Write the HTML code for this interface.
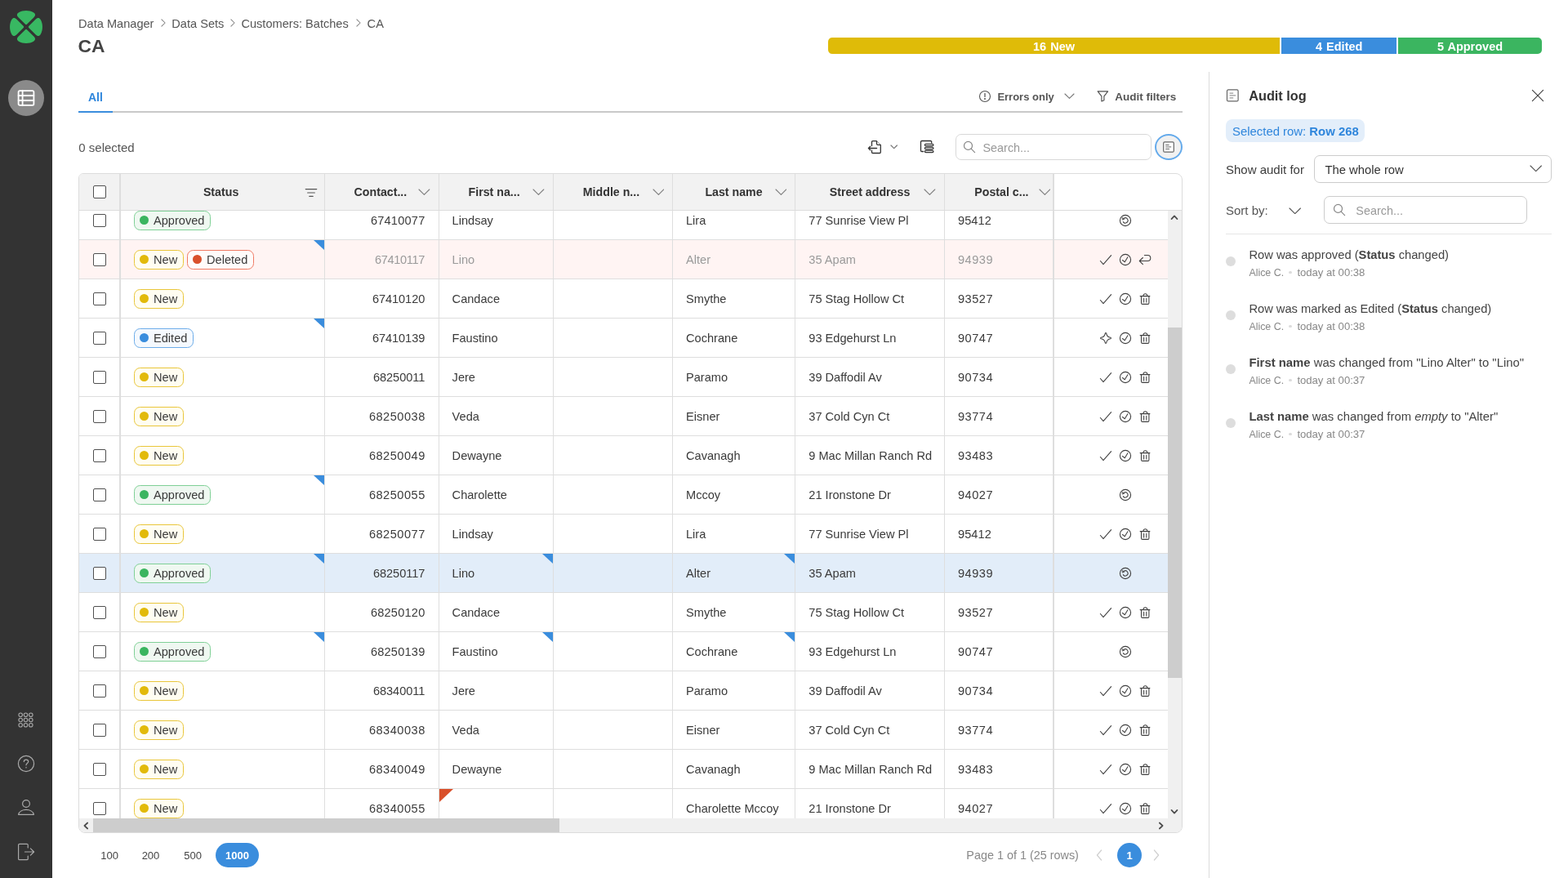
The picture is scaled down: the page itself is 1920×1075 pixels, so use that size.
<!DOCTYPE html>
<html lang="en"><head><meta charset="utf-8"><title>CA - Data Manager</title>
<style>
html,body{margin:0;padding:0}
html{width:1920px;height:1075px;overflow:hidden}
body{width:1920px;height:1075px;position:relative;overflow:hidden;background:#fff;font-family:"Liberation Sans",sans-serif;color:#444}
div,svg{position:absolute;box-sizing:border-box}
.t{white-space:nowrap}
b{font-weight:700}
.cb{width:16px;height:16px;border:1px solid #505050;border-radius:2px;background:#fff}
.badge{height:24px;border:1px solid;border-radius:7.5px}
.dot{width:11px;height:11px;border-radius:50%;left:5.5px;top:4.6px}
.row{left:0;width:1333px;height:48px;border-bottom:1px solid #dedede}
.vl{top:0;width:1px;background:#dedede}
.tri{width:0;height:0;border-style:solid}
</style></head><body>
<div id="app" style="left:0;top:0;width:1920px;height:1075px;overflow:hidden;will-change:transform">

<div style="left:0px;top:0px;width:64px;height:1075px;background:#333"></div>
<svg width="44" height="44" viewBox="-22 -22 44 44" style="position:absolute;left:10px;top:10.8px"><g fill="#38b862"><path transform="rotate(0)" d="M-0.9 -3.2 Q0 -2.3 0.9 -3.2 L9.3 -11.5 C11.6 -13.8 11.8 -16 9 -17.7 C4 -20.7 -4 -20.7 -9 -17.7 C-11.8 -16 -11.6 -13.8 -9.3 -11.5 Z"/><path transform="rotate(90)" d="M-0.9 -3.2 Q0 -2.3 0.9 -3.2 L9.3 -11.5 C11.6 -13.8 11.8 -16 9 -17.7 C4 -20.7 -4 -20.7 -9 -17.7 C-11.8 -16 -11.6 -13.8 -9.3 -11.5 Z"/><path transform="rotate(180)" d="M-0.9 -3.2 Q0 -2.3 0.9 -3.2 L9.3 -11.5 C11.6 -13.8 11.8 -16 9 -17.7 C4 -20.7 -4 -20.7 -9 -17.7 C-11.8 -16 -11.6 -13.8 -9.3 -11.5 Z"/><path transform="rotate(270)" d="M-0.9 -3.2 Q0 -2.3 0.9 -3.2 L9.3 -11.5 C11.6 -13.8 11.8 -16 9 -17.7 C4 -20.7 -4 -20.7 -9 -17.7 C-11.8 -16 -11.6 -13.8 -9.3 -11.5 Z"/></g></svg>
<div style="left:10px;top:98px;width:44px;height:44px;border-radius:50%;background:#8a8a8a"></div>
<svg width="22" height="22" viewBox="0 0 22 22" fill="none" stroke="#fff" stroke-width="1.8" stroke-linecap="round" stroke-linejoin="round" style="position:absolute;left:21px;top:109px"><rect x="1.6" y="2.1" width="18.8" height="17.8" rx="1.6"/><path d="M1.6 8 H20.4 M1.6 14 H20.4 M6.6 2.1 V19.9"/></svg>
<svg width="21" height="21" viewBox="0 0 21 21" fill="none" stroke="#a9a9a9" stroke-width="1.1" stroke-linecap="round" stroke-linejoin="round" style="position:absolute;left:21.2px;top:870.6px"><circle cx="4.2" cy="4.2" r="2.25"/><circle cx="4.2" cy="10.5" r="2.25"/><circle cx="4.2" cy="16.8" r="2.25"/><circle cx="10.5" cy="4.2" r="2.25"/><circle cx="10.5" cy="10.5" r="2.25"/><circle cx="10.5" cy="16.8" r="2.25"/><circle cx="16.8" cy="4.2" r="2.25"/><circle cx="16.8" cy="10.5" r="2.25"/><circle cx="16.8" cy="16.8" r="2.25"/></svg>
<svg width="22" height="22" viewBox="0 0 22 22" fill="none" stroke="#a9a9a9" stroke-width="1.2" stroke-linecap="round" stroke-linejoin="round" style="position:absolute;left:21px;top:924px"><circle cx="11" cy="11" r="9.6"/><path d="M8.3 8.6 C8.3 5.4 13.7 5.4 13.7 8.6 C13.7 10.6 11 10.6 11 12.8"/><path d="M11 15.4 V15.9"/></svg>
<svg width="22" height="22" viewBox="0 0 22 22" fill="none" stroke="#a9a9a9" stroke-width="1.2" stroke-linecap="round" stroke-linejoin="round" style="position:absolute;left:21px;top:978px"><circle cx="11" cy="6" r="4.4"/><path d="M1.6 19.4 C3 11.4 19 11.4 20.4 19.4 Z"/></svg>
<svg width="22" height="22" viewBox="0 0 22 22" fill="none" stroke="#a9a9a9" stroke-width="1.2" stroke-linecap="round" stroke-linejoin="round" style="position:absolute;left:21px;top:1032px"><path d="M13.2 6 V2.6 C13.2 1.8 12.7 1.3 11.9 1.3 H2.9 C2.1 1.3 1.6 1.8 1.6 2.6 V19.4 C1.6 20.2 2.1 20.7 2.9 20.7 H11.9 C12.7 20.7 13.2 20.2 13.2 19.4 V16"/><path d="M9.4 11 H20.4 M16.4 6.8 L20.6 11 L16.4 15.2"/></svg>
<div class="t" style="top:19.00px;height:20px;line-height:20px;font-size:14.6px;color:#555;left:96px;">Data Manager</div>
<div class="t" style="top:19.00px;height:20px;line-height:20px;font-size:14.6px;color:#555;left:210.3px;">Data Sets</div>
<div class="t" style="top:19.00px;height:20px;line-height:20px;font-size:14.6px;color:#555;left:295.4px;">Customers: Batches</div>
<div class="t" style="top:19.00px;height:20px;line-height:20px;font-size:14.6px;color:#555;left:449.6px;">CA</div>
<svg width="8" height="12" viewBox="0 0 8 12" fill="none" stroke="#858585" stroke-width="1.05" stroke-linecap="round" stroke-linejoin="round" style="position:absolute;left:195.9px;top:22.4px"><path d="M1.9 1.8 L6.1 6 L1.9 10.2"/></svg>
<svg width="8" height="12" viewBox="0 0 8 12" fill="none" stroke="#858585" stroke-width="1.05" stroke-linecap="round" stroke-linejoin="round" style="position:absolute;left:281.1px;top:22.4px"><path d="M1.9 1.8 L6.1 6 L1.9 10.2"/></svg>
<svg width="8" height="12" viewBox="0 0 8 12" fill="none" stroke="#858585" stroke-width="1.05" stroke-linecap="round" stroke-linejoin="round" style="position:absolute;left:435.1px;top:22.4px"><path d="M1.9 1.8 L6.1 6 L1.9 10.2"/></svg>
<div class="t" style="top:42.30px;height:28px;line-height:28px;font-size:22.8px;color:#444;font-weight:700;left:95.6px;">CA</div>
<div style="left:1014px;top:46px;width:553px;height:20px;background:#dfbb08;border-radius:5px 0 0 5px"></div>
<div style="left:1569px;top:46px;width:141px;height:20px;background:#3a8ddd"></div>
<div style="left:1712px;top:46px;width:176px;height:20px;background:#3bb560;border-radius:0 5px 5px 0"></div>
<div class="t" style="top:46.50px;height:20px;line-height:20px;font-size:14.5px;color:#fff;font-weight:700;left:1210.5px;width:160px;text-align:center;word-spacing:1px;">16 New</div>
<div class="t" style="top:46.50px;height:20px;line-height:20px;font-size:14.5px;color:#fff;font-weight:700;left:1559.7px;width:160px;text-align:center;word-spacing:1px;">4 Edited</div>
<div class="t" style="top:46.50px;height:20px;line-height:20px;font-size:14.5px;color:#fff;font-weight:700;left:1720px;width:160px;text-align:center;word-spacing:1px;">5 Approved</div>
<div style="left:96px;top:136px;width:1352px;height:2px;background:#c9c9c9"></div>
<div style="left:96px;top:136px;width:42px;height:2px;background:#3a8ddd"></div>
<div class="t" style="top:108.50px;height:20px;line-height:20px;font-size:14px;color:#2f86dc;font-weight:700;left:108px;">All</div>
<svg width="16" height="16" viewBox="0 0 16 16" fill="none" stroke="#555" stroke-width="1.1" stroke-linecap="round" stroke-linejoin="round" style="position:absolute;left:1198.2px;top:110px"><circle cx="8" cy="8" r="6.5"/><path d="M8 4.6 V8.4" stroke-width="1.3"/><circle cx="8" cy="10.9" r="0.45" fill="#555"/></svg>
<div class="t" style="top:108.50px;height:20px;line-height:20px;font-size:13px;color:#555;font-weight:700;left:1221.4px;">Errors only</div>
<svg width="13" height="7.4" viewBox="0 0 13 7.4" fill="none" stroke="#777" stroke-width="1.1" stroke-linecap="round" stroke-linejoin="round" style="position:absolute;left:1302.60px;top:114.40px"><path d="M1 1 L6.5 6.4 L12 1"/></svg>
<svg width="18" height="18" viewBox="0 0 18 18" fill="none" stroke="#505050" stroke-width="1.15" stroke-linecap="round" stroke-linejoin="round" style="position:absolute;left:1340.5px;top:109px"><path d="M3.2 2.8 H15.6 L10.9 8.8 V13.7 L7.9 15 V8.8 Z"/></svg>
<div class="t" style="top:108.50px;height:20px;line-height:20px;font-size:13.5px;color:#555;font-weight:700;left:1365.2px;">Audit filters</div>
<div class="t" style="top:171.00px;height:20px;line-height:20px;font-size:15px;color:#555;left:96.3px;">0 selected</div>
<svg width="20" height="20" viewBox="0 0 20 20" fill="none" stroke="#333" stroke-width="1.3" stroke-linecap="round" stroke-linejoin="round" style="position:absolute;left:1062px;top:170px"><path d="M5.5 8.6 V3.9 C5.5 3.1 6 2.6 6.8 2.6 H11.5 V6 C11.5 6.8 12 7.3 12.8 7.3 H16.3 V16.2 C16.3 17 15.8 17.5 15 17.5 H6.8 C6 17.5 5.5 17 5.5 16.2 V14.2"/><path d="M11.7 2.8 L16.1 7.1" stroke-width="0.8" stroke="#777"/><path d="M1.4 11.5 H11.6 M3.7 9.3 L1.4 11.5 L3.7 13.7"/></svg>
<svg width="9.4" height="5.7" viewBox="0 0 9.4 5.7" fill="none" stroke="#777" stroke-width="1.2" stroke-linecap="round" stroke-linejoin="round" style="position:absolute;left:1090.20px;top:177.45px"><path d="M1 1 L4.7 4.7 L8.4 1"/></svg>
<svg width="20" height="20" viewBox="0 0 20 20" fill="none" stroke="#333" stroke-width="1.3" stroke-linecap="round" stroke-linejoin="round" style="position:absolute;left:1125px;top:170px"><path d="M15.7 4.9 V3.8 C15.7 3 15.2 2.5 14.4 2.5 H3.8 C3 2.5 2.5 3 2.5 3.8 V14.2 C2.5 15 3 15.5 3.8 15.5 H5.6"/><rect x="7.4" y="6.4" width="10.5" height="2.3" rx="1.15"/><rect x="7.4" y="10.4" width="10.5" height="2.3" rx="1.15"/><rect x="7.4" y="14.4" width="10.5" height="2.3" rx="1.15"/></svg>
<div style="left:1170px;top:164px;width:240px;height:32px;border:1px solid #d8d8d8;border-radius:7px;background:#fff"></div>
<svg width="18" height="18" viewBox="0 0 18 18" fill="none" stroke="#888" stroke-width="1.2" stroke-linecap="round" stroke-linejoin="round" style="position:absolute;left:1178px;top:171px"><circle cx="7.5" cy="7.4" r="5"/><path d="M11.2 11.2 L15.6 15.6"/></svg>
<div class="t" style="top:171.00px;height:20px;line-height:20px;font-size:14.4px;color:#999;left:1203.5px;">Search...</div>
<div style="left:1414px;top:164px;width:34px;height:32px;border:2px solid #64aaeb;border-radius:50%;background:#f1f1f1"></div>
<svg width="16" height="16" viewBox="0 0 16 16" fill="none" stroke="#666" stroke-width="1.2" stroke-linecap="round" stroke-linejoin="round" style="position:absolute;left:1423px;top:171.9px"><rect x="1.7" y="1.8" width="12.6" height="12.4" rx="1.5" fill="#fff"/><path d="M4.6 5.5 H8.2 M4.6 7.9 H10.8 M4.6 10.4 H8.6" stroke-width="1"/></svg>
<div style="left:96px;top:212px;width:1352px;height:808px;border:1px solid #dcdcdc;border-radius:6px 8px 8px 8px;overflow:hidden;background:#fff">
<div style="left:0px;top:0px;width:1193px;height:44px;background:#f2f2f2"></div>
<div style="left:0px;top:44px;width:1350px;height:1px;background:#dcdcdc"></div>
<div style="left:0;top:45px;width:1333px;height:744px;overflow:hidden">
<div class="row" style="top:-12px;background:#fff">
<div class="cb" style="left:17px;top:16.0px"></div>
<div class="badge" style="left:67px;top:12.0px;width:94px;border-color:#7fd096;background:#eff8f1"><div class="dot" style="background:#3bb560"></div><div class="t" style="left:23px;top:0;height:22px;line-height:22px;font-size:14.6px;color:#3a3a3a">Approved</div></div>
<div class="t" style="top:14.0px;height:20px;line-height:20px;font-size:14.6px;color:#3a3a3a;right:909.49px;"><span style="letter-spacing:0.21px">67410077</span></div>
<div class="t" style="top:14.0px;height:20px;line-height:20px;font-size:14.6px;color:#3a3a3a;left:456.6px;">Lindsay</div>
<div class="t" style="top:14.0px;height:20px;line-height:20px;font-size:14.6px;color:#3a3a3a;left:743px;">Lira</div>
<div class="t" style="top:14.0px;height:20px;line-height:20px;font-size:14.6px;color:#3a3a3a;left:893.3px;">77 Sunrise View Pl</div>
<div class="t" style="top:14.0px;height:20px;line-height:20px;font-size:14.6px;color:#3a3a3a;left:1076px;"><span style="letter-spacing:0.04px">95412</span></div>
<svg width="16" height="16" viewBox="0 0 16 16" fill="none" stroke="#404040" stroke-width="1.08" stroke-linecap="round" stroke-linejoin="round" style="position:absolute;left:1272.90px;top:15.90px"><circle cx="8" cy="8" r="6.6"/><path d="M5.3 9.6 A3.1 3.1 0 1 0 6.3 5.3"/><path d="M4.5 4.5 L6.9 6.3 L4.6 7.1 Z" fill="#444" stroke-width="0.6"/></svg>
</div>
<div class="row" style="top:36px;background:#fff4f3">
<div class="cb" style="left:17px;top:16.0px"></div>
<div class="badge" style="left:67px;top:12.0px;width:61px;border-color:#e9c63a;background:#fffdf1"><div class="dot" style="background:#e2ba0a"></div><div class="t" style="left:23px;top:0;height:22px;line-height:22px;font-size:14.6px;color:#3a3a3a">New</div></div>
<div class="badge" style="left:132px;top:12.0px;width:82px;border-color:#f07a63;background:#fffbfa"><div class="dot" style="background:#d9502b"></div><div class="t" style="left:23px;top:0;height:22px;line-height:22px;font-size:14.6px;color:#3a3a3a">Deleted</div></div>
<div class="t" style="top:14.0px;height:20px;line-height:20px;font-size:14.6px;color:#9a9a9a;right:910.07px;"><span style="letter-spacing:-0.37px">67410117</span></div>
<div class="t" style="top:14.0px;height:20px;line-height:20px;font-size:14.6px;color:#9a9a9a;left:456.6px;">Lino</div>
<div class="t" style="top:14.0px;height:20px;line-height:20px;font-size:14.6px;color:#9a9a9a;left:743px;">Alter</div>
<div class="t" style="top:14.0px;height:20px;line-height:20px;font-size:14.6px;color:#9a9a9a;left:893.3px;">35 Apam</div>
<div class="t" style="top:14.0px;height:20px;line-height:20px;font-size:14.6px;color:#9a9a9a;left:1076px;"><span style="letter-spacing:0.5px">94939</span></div>
<div class="tri" style="left:287px;top:0;border-width:0 13px 12px 0;border-color:transparent #3a8ddd transparent transparent"></div>
<svg width="16" height="16" viewBox="0 0 16 16" fill="none" stroke="#404040" stroke-width="1.08" stroke-linecap="round" stroke-linejoin="round" style="position:absolute;left:1248.90px;top:15.90px"><path d="M1.4 9.5 L5 13.6 L14.6 2.6"/></svg>
<svg width="16" height="16" viewBox="0 0 16 16" fill="none" stroke="#404040" stroke-width="1.08" stroke-linecap="round" stroke-linejoin="round" style="position:absolute;left:1272.90px;top:15.90px"><circle cx="8" cy="8" r="6.6"/><path d="M4.5 8.5 L7.3 10.8 L10.9 4.7"/></svg>
<svg width="16" height="16" viewBox="0 0 16 16" fill="none" stroke="#404040" stroke-width="1.08" stroke-linecap="round" stroke-linejoin="round" style="position:absolute;left:1296.80px;top:15.90px"><path d="M7.4 2.5 H11.3 A3.5 3.5 0 0 1 11.3 9.5 H1.5"/><path d="M5.4 5.5 L1.3 9.5 L5.4 13.6"/></svg>
</div>
<div class="row" style="top:84px;background:#fff">
<div class="cb" style="left:17px;top:16.0px"></div>
<div class="badge" style="left:67px;top:12.0px;width:61px;border-color:#e9c63a;background:#fffdf1"><div class="dot" style="background:#e2ba0a"></div><div class="t" style="left:23px;top:0;height:22px;line-height:22px;font-size:14.6px;color:#3a3a3a">New</div></div>
<div class="t" style="top:14.0px;height:20px;line-height:20px;font-size:14.6px;color:#3a3a3a;right:909.7800000000001px;"><span style="letter-spacing:-0.08px">67410120</span></div>
<div class="t" style="top:14.0px;height:20px;line-height:20px;font-size:14.6px;color:#3a3a3a;left:456.6px;">Candace</div>
<div class="t" style="top:14.0px;height:20px;line-height:20px;font-size:14.6px;color:#3a3a3a;left:743px;">Smythe</div>
<div class="t" style="top:14.0px;height:20px;line-height:20px;font-size:14.6px;color:#3a3a3a;left:893.3px;">75 Stag Hollow Ct</div>
<div class="t" style="top:14.0px;height:20px;line-height:20px;font-size:14.6px;color:#3a3a3a;left:1076px;"><span style="letter-spacing:0.5px">93527</span></div>
<svg width="16" height="16" viewBox="0 0 16 16" fill="none" stroke="#404040" stroke-width="1.08" stroke-linecap="round" stroke-linejoin="round" style="position:absolute;left:1248.90px;top:15.90px"><path d="M1.4 9.5 L5 13.6 L14.6 2.6"/></svg>
<svg width="16" height="16" viewBox="0 0 16 16" fill="none" stroke="#404040" stroke-width="1.08" stroke-linecap="round" stroke-linejoin="round" style="position:absolute;left:1272.90px;top:15.90px"><circle cx="8" cy="8" r="6.6"/><path d="M4.5 8.5 L7.3 10.8 L10.9 4.7"/></svg>
<svg width="16" height="16" viewBox="0 0 16 16" fill="none" stroke="#404040" stroke-width="1.08" stroke-linecap="round" stroke-linejoin="round" style="position:absolute;left:1296.80px;top:15.90px"><path d="M2.1 4.6 H13.9"/><path d="M5.8 4.5 C6.3 0.8 10.5 0.8 11 4.5"/><path d="M3.5 4.8 V13 C3.5 13.9 4 14.4 4.9 14.4 H11.5 C12.4 14.4 12.9 13.9 12.9 13 V4.8"/><path d="M6.65 7.2 V11.9 M9.8 7.2 V11.9"/></svg>
</div>
<div class="row" style="top:132px;background:#fff">
<div class="cb" style="left:17px;top:16.0px"></div>
<div class="badge" style="left:67px;top:12.0px;width:73px;border-color:#6cace9;background:#f5f9fe"><div class="dot" style="background:#3a8ddd"></div><div class="t" style="left:23px;top:0;height:22px;line-height:22px;font-size:14.6px;color:#3a3a3a">Edited</div></div>
<div class="t" style="top:14.0px;height:20px;line-height:20px;font-size:14.6px;color:#3a3a3a;right:909.7800000000001px;"><span style="letter-spacing:-0.08px">67410139</span></div>
<div class="t" style="top:14.0px;height:20px;line-height:20px;font-size:14.6px;color:#3a3a3a;left:456.6px;">Faustino</div>
<div class="t" style="top:14.0px;height:20px;line-height:20px;font-size:14.6px;color:#3a3a3a;left:743px;">Cochrane</div>
<div class="t" style="top:14.0px;height:20px;line-height:20px;font-size:14.6px;color:#3a3a3a;left:893.3px;">93 Edgehurst Ln</div>
<div class="t" style="top:14.0px;height:20px;line-height:20px;font-size:14.6px;color:#3a3a3a;left:1076px;"><span style="letter-spacing:0.5px">90747</span></div>
<div class="tri" style="left:287px;top:0;border-width:0 13px 12px 0;border-color:transparent #3a8ddd transparent transparent"></div>
<svg width="16" height="16" viewBox="0 0 16 16" fill="none" stroke="#404040" stroke-width="1.08" stroke-linecap="round" stroke-linejoin="round" style="position:absolute;left:1248.90px;top:15.90px"><path d="M8.7 2.1 C9.1 5.3 10.7 6.9 13.9 7.3 A0.75 0.75 0 0 1 13.9 8.7 C10.7 9.1 9.1 10.7 8.7 13.9 A0.75 0.75 0 0 1 7.3 13.9 C6.9 10.7 5.3 9.1 2.1 8.7 A0.75 0.75 0 0 1 2.1 7.3 C5.3 6.9 6.9 5.3 7.3 2.1 A0.75 0.75 0 0 1 8.7 2.1 Z"/></svg>
<svg width="16" height="16" viewBox="0 0 16 16" fill="none" stroke="#404040" stroke-width="1.08" stroke-linecap="round" stroke-linejoin="round" style="position:absolute;left:1272.90px;top:15.90px"><circle cx="8" cy="8" r="6.6"/><path d="M4.5 8.5 L7.3 10.8 L10.9 4.7"/></svg>
<svg width="16" height="16" viewBox="0 0 16 16" fill="none" stroke="#404040" stroke-width="1.08" stroke-linecap="round" stroke-linejoin="round" style="position:absolute;left:1296.80px;top:15.90px"><path d="M2.1 4.6 H13.9"/><path d="M5.8 4.5 C6.3 0.8 10.5 0.8 11 4.5"/><path d="M3.5 4.8 V13 C3.5 13.9 4 14.4 4.9 14.4 H11.5 C12.4 14.4 12.9 13.9 12.9 13 V4.8"/><path d="M6.65 7.2 V11.9 M9.8 7.2 V11.9"/></svg>
</div>
<div class="row" style="top:180px;background:#fff">
<div class="cb" style="left:17px;top:16.0px"></div>
<div class="badge" style="left:67px;top:12.0px;width:61px;border-color:#e9c63a;background:#fffdf1"><div class="dot" style="background:#e2ba0a"></div><div class="t" style="left:23px;top:0;height:22px;line-height:22px;font-size:14.6px;color:#3a3a3a">New</div></div>
<div class="t" style="top:14.0px;height:20px;line-height:20px;font-size:14.6px;color:#3a3a3a;right:909.7800000000001px;"><span style="letter-spacing:-0.08px">68250011</span></div>
<div class="t" style="top:14.0px;height:20px;line-height:20px;font-size:14.6px;color:#3a3a3a;left:456.6px;">Jere</div>
<div class="t" style="top:14.0px;height:20px;line-height:20px;font-size:14.6px;color:#3a3a3a;left:743px;">Paramo</div>
<div class="t" style="top:14.0px;height:20px;line-height:20px;font-size:14.6px;color:#3a3a3a;left:893.3px;">39 Daffodil Av</div>
<div class="t" style="top:14.0px;height:20px;line-height:20px;font-size:14.6px;color:#3a3a3a;left:1076px;"><span style="letter-spacing:0.5px">90734</span></div>
<svg width="16" height="16" viewBox="0 0 16 16" fill="none" stroke="#404040" stroke-width="1.08" stroke-linecap="round" stroke-linejoin="round" style="position:absolute;left:1248.90px;top:15.90px"><path d="M1.4 9.5 L5 13.6 L14.6 2.6"/></svg>
<svg width="16" height="16" viewBox="0 0 16 16" fill="none" stroke="#404040" stroke-width="1.08" stroke-linecap="round" stroke-linejoin="round" style="position:absolute;left:1272.90px;top:15.90px"><circle cx="8" cy="8" r="6.6"/><path d="M4.5 8.5 L7.3 10.8 L10.9 4.7"/></svg>
<svg width="16" height="16" viewBox="0 0 16 16" fill="none" stroke="#404040" stroke-width="1.08" stroke-linecap="round" stroke-linejoin="round" style="position:absolute;left:1296.80px;top:15.90px"><path d="M2.1 4.6 H13.9"/><path d="M5.8 4.5 C6.3 0.8 10.5 0.8 11 4.5"/><path d="M3.5 4.8 V13 C3.5 13.9 4 14.4 4.9 14.4 H11.5 C12.4 14.4 12.9 13.9 12.9 13 V4.8"/><path d="M6.65 7.2 V11.9 M9.8 7.2 V11.9"/></svg>
</div>
<div class="row" style="top:228px;background:#fff">
<div class="cb" style="left:17px;top:16.0px"></div>
<div class="badge" style="left:67px;top:12.0px;width:61px;border-color:#e9c63a;background:#fffdf1"><div class="dot" style="background:#e2ba0a"></div><div class="t" style="left:23px;top:0;height:22px;line-height:22px;font-size:14.6px;color:#3a3a3a">New</div></div>
<div class="t" style="top:14.0px;height:20px;line-height:20px;font-size:14.6px;color:#3a3a3a;right:909.2px;"><span style="letter-spacing:0.5px">68250038</span></div>
<div class="t" style="top:14.0px;height:20px;line-height:20px;font-size:14.6px;color:#3a3a3a;left:456.6px;">Veda</div>
<div class="t" style="top:14.0px;height:20px;line-height:20px;font-size:14.6px;color:#3a3a3a;left:743px;">Eisner</div>
<div class="t" style="top:14.0px;height:20px;line-height:20px;font-size:14.6px;color:#3a3a3a;left:893.3px;">37 Cold Cyn Ct</div>
<div class="t" style="top:14.0px;height:20px;line-height:20px;font-size:14.6px;color:#3a3a3a;left:1076px;"><span style="letter-spacing:0.5px">93774</span></div>
<svg width="16" height="16" viewBox="0 0 16 16" fill="none" stroke="#404040" stroke-width="1.08" stroke-linecap="round" stroke-linejoin="round" style="position:absolute;left:1248.90px;top:15.90px"><path d="M1.4 9.5 L5 13.6 L14.6 2.6"/></svg>
<svg width="16" height="16" viewBox="0 0 16 16" fill="none" stroke="#404040" stroke-width="1.08" stroke-linecap="round" stroke-linejoin="round" style="position:absolute;left:1272.90px;top:15.90px"><circle cx="8" cy="8" r="6.6"/><path d="M4.5 8.5 L7.3 10.8 L10.9 4.7"/></svg>
<svg width="16" height="16" viewBox="0 0 16 16" fill="none" stroke="#404040" stroke-width="1.08" stroke-linecap="round" stroke-linejoin="round" style="position:absolute;left:1296.80px;top:15.90px"><path d="M2.1 4.6 H13.9"/><path d="M5.8 4.5 C6.3 0.8 10.5 0.8 11 4.5"/><path d="M3.5 4.8 V13 C3.5 13.9 4 14.4 4.9 14.4 H11.5 C12.4 14.4 12.9 13.9 12.9 13 V4.8"/><path d="M6.65 7.2 V11.9 M9.8 7.2 V11.9"/></svg>
</div>
<div class="row" style="top:276px;background:#fff">
<div class="cb" style="left:17px;top:16.0px"></div>
<div class="badge" style="left:67px;top:12.0px;width:61px;border-color:#e9c63a;background:#fffdf1"><div class="dot" style="background:#e2ba0a"></div><div class="t" style="left:23px;top:0;height:22px;line-height:22px;font-size:14.6px;color:#3a3a3a">New</div></div>
<div class="t" style="top:14.0px;height:20px;line-height:20px;font-size:14.6px;color:#3a3a3a;right:909.2px;"><span style="letter-spacing:0.5px">68250049</span></div>
<div class="t" style="top:14.0px;height:20px;line-height:20px;font-size:14.6px;color:#3a3a3a;left:456.6px;">Dewayne</div>
<div class="t" style="top:14.0px;height:20px;line-height:20px;font-size:14.6px;color:#3a3a3a;left:743px;">Cavanagh</div>
<div class="t" style="top:14.0px;height:20px;line-height:20px;font-size:14.6px;color:#3a3a3a;left:893.3px;">9 Mac Millan Ranch Rd</div>
<div class="t" style="top:14.0px;height:20px;line-height:20px;font-size:14.6px;color:#3a3a3a;left:1076px;"><span style="letter-spacing:0.5px">93483</span></div>
<svg width="16" height="16" viewBox="0 0 16 16" fill="none" stroke="#404040" stroke-width="1.08" stroke-linecap="round" stroke-linejoin="round" style="position:absolute;left:1248.90px;top:15.90px"><path d="M1.4 9.5 L5 13.6 L14.6 2.6"/></svg>
<svg width="16" height="16" viewBox="0 0 16 16" fill="none" stroke="#404040" stroke-width="1.08" stroke-linecap="round" stroke-linejoin="round" style="position:absolute;left:1272.90px;top:15.90px"><circle cx="8" cy="8" r="6.6"/><path d="M4.5 8.5 L7.3 10.8 L10.9 4.7"/></svg>
<svg width="16" height="16" viewBox="0 0 16 16" fill="none" stroke="#404040" stroke-width="1.08" stroke-linecap="round" stroke-linejoin="round" style="position:absolute;left:1296.80px;top:15.90px"><path d="M2.1 4.6 H13.9"/><path d="M5.8 4.5 C6.3 0.8 10.5 0.8 11 4.5"/><path d="M3.5 4.8 V13 C3.5 13.9 4 14.4 4.9 14.4 H11.5 C12.4 14.4 12.9 13.9 12.9 13 V4.8"/><path d="M6.65 7.2 V11.9 M9.8 7.2 V11.9"/></svg>
</div>
<div class="row" style="top:324px;background:#fff">
<div class="cb" style="left:17px;top:16.0px"></div>
<div class="badge" style="left:67px;top:12.0px;width:94px;border-color:#7fd096;background:#eff8f1"><div class="dot" style="background:#3bb560"></div><div class="t" style="left:23px;top:0;height:22px;line-height:22px;font-size:14.6px;color:#3a3a3a">Approved</div></div>
<div class="t" style="top:14.0px;height:20px;line-height:20px;font-size:14.6px;color:#3a3a3a;right:909.2px;"><span style="letter-spacing:0.5px">68250055</span></div>
<div class="t" style="top:14.0px;height:20px;line-height:20px;font-size:14.6px;color:#3a3a3a;left:456.6px;">Charolette</div>
<div class="t" style="top:14.0px;height:20px;line-height:20px;font-size:14.6px;color:#3a3a3a;left:743px;">Mccoy</div>
<div class="t" style="top:14.0px;height:20px;line-height:20px;font-size:14.6px;color:#3a3a3a;left:893.3px;">21 Ironstone Dr</div>
<div class="t" style="top:14.0px;height:20px;line-height:20px;font-size:14.6px;color:#3a3a3a;left:1076px;"><span style="letter-spacing:0.5px">94027</span></div>
<div class="tri" style="left:287px;top:0;border-width:0 13px 12px 0;border-color:transparent #3a8ddd transparent transparent"></div>
<svg width="16" height="16" viewBox="0 0 16 16" fill="none" stroke="#404040" stroke-width="1.08" stroke-linecap="round" stroke-linejoin="round" style="position:absolute;left:1272.90px;top:15.90px"><circle cx="8" cy="8" r="6.6"/><path d="M5.3 9.6 A3.1 3.1 0 1 0 6.3 5.3"/><path d="M4.5 4.5 L6.9 6.3 L4.6 7.1 Z" fill="#444" stroke-width="0.6"/></svg>
</div>
<div class="row" style="top:372px;background:#fff">
<div class="cb" style="left:17px;top:16.0px"></div>
<div class="badge" style="left:67px;top:12.0px;width:61px;border-color:#e9c63a;background:#fffdf1"><div class="dot" style="background:#e2ba0a"></div><div class="t" style="left:23px;top:0;height:22px;line-height:22px;font-size:14.6px;color:#3a3a3a">New</div></div>
<div class="t" style="top:14.0px;height:20px;line-height:20px;font-size:14.6px;color:#3a3a3a;right:909.2px;"><span style="letter-spacing:0.5px">68250077</span></div>
<div class="t" style="top:14.0px;height:20px;line-height:20px;font-size:14.6px;color:#3a3a3a;left:456.6px;">Lindsay</div>
<div class="t" style="top:14.0px;height:20px;line-height:20px;font-size:14.6px;color:#3a3a3a;left:743px;">Lira</div>
<div class="t" style="top:14.0px;height:20px;line-height:20px;font-size:14.6px;color:#3a3a3a;left:893.3px;">77 Sunrise View Pl</div>
<div class="t" style="top:14.0px;height:20px;line-height:20px;font-size:14.6px;color:#3a3a3a;left:1076px;"><span style="letter-spacing:0.04px">95412</span></div>
<svg width="16" height="16" viewBox="0 0 16 16" fill="none" stroke="#404040" stroke-width="1.08" stroke-linecap="round" stroke-linejoin="round" style="position:absolute;left:1248.90px;top:15.90px"><path d="M1.4 9.5 L5 13.6 L14.6 2.6"/></svg>
<svg width="16" height="16" viewBox="0 0 16 16" fill="none" stroke="#404040" stroke-width="1.08" stroke-linecap="round" stroke-linejoin="round" style="position:absolute;left:1272.90px;top:15.90px"><circle cx="8" cy="8" r="6.6"/><path d="M4.5 8.5 L7.3 10.8 L10.9 4.7"/></svg>
<svg width="16" height="16" viewBox="0 0 16 16" fill="none" stroke="#404040" stroke-width="1.08" stroke-linecap="round" stroke-linejoin="round" style="position:absolute;left:1296.80px;top:15.90px"><path d="M2.1 4.6 H13.9"/><path d="M5.8 4.5 C6.3 0.8 10.5 0.8 11 4.5"/><path d="M3.5 4.8 V13 C3.5 13.9 4 14.4 4.9 14.4 H11.5 C12.4 14.4 12.9 13.9 12.9 13 V4.8"/><path d="M6.65 7.2 V11.9 M9.8 7.2 V11.9"/></svg>
</div>
<div class="row" style="top:420px;background:#e2edf9">
<div class="cb" style="left:17px;top:16.0px"></div>
<div class="badge" style="left:67px;top:12.0px;width:94px;border-color:#7fd096;background:#eff8f1"><div class="dot" style="background:#3bb560"></div><div class="t" style="left:23px;top:0;height:22px;line-height:22px;font-size:14.6px;color:#3a3a3a">Approved</div></div>
<div class="t" style="top:14.0px;height:20px;line-height:20px;font-size:14.6px;color:#3a3a3a;right:909.7800000000001px;"><span style="letter-spacing:-0.08px">68250117</span></div>
<div class="t" style="top:14.0px;height:20px;line-height:20px;font-size:14.6px;color:#3a3a3a;left:456.6px;">Lino</div>
<div class="t" style="top:14.0px;height:20px;line-height:20px;font-size:14.6px;color:#3a3a3a;left:743px;">Alter</div>
<div class="t" style="top:14.0px;height:20px;line-height:20px;font-size:14.6px;color:#3a3a3a;left:893.3px;">35 Apam</div>
<div class="t" style="top:14.0px;height:20px;line-height:20px;font-size:14.6px;color:#3a3a3a;left:1076px;"><span style="letter-spacing:0.5px">94939</span></div>
<div class="tri" style="left:287px;top:0;border-width:0 13px 12px 0;border-color:transparent #3a8ddd transparent transparent"></div>
<div class="tri" style="left:567px;top:0;border-width:0 13px 12px 0;border-color:transparent #3a8ddd transparent transparent"></div>
<div class="tri" style="left:863px;top:0;border-width:0 13px 12px 0;border-color:transparent #3a8ddd transparent transparent"></div>
<svg width="16" height="16" viewBox="0 0 16 16" fill="none" stroke="#404040" stroke-width="1.08" stroke-linecap="round" stroke-linejoin="round" style="position:absolute;left:1272.90px;top:15.90px"><circle cx="8" cy="8" r="6.6"/><path d="M5.3 9.6 A3.1 3.1 0 1 0 6.3 5.3"/><path d="M4.5 4.5 L6.9 6.3 L4.6 7.1 Z" fill="#444" stroke-width="0.6"/></svg>
</div>
<div class="row" style="top:468px;background:#fff">
<div class="cb" style="left:17px;top:16.0px"></div>
<div class="badge" style="left:67px;top:12.0px;width:61px;border-color:#e9c63a;background:#fffdf1"><div class="dot" style="background:#e2ba0a"></div><div class="t" style="left:23px;top:0;height:22px;line-height:22px;font-size:14.6px;color:#3a3a3a">New</div></div>
<div class="t" style="top:14.0px;height:20px;line-height:20px;font-size:14.6px;color:#3a3a3a;right:909.49px;"><span style="letter-spacing:0.21px">68250120</span></div>
<div class="t" style="top:14.0px;height:20px;line-height:20px;font-size:14.6px;color:#3a3a3a;left:456.6px;">Candace</div>
<div class="t" style="top:14.0px;height:20px;line-height:20px;font-size:14.6px;color:#3a3a3a;left:743px;">Smythe</div>
<div class="t" style="top:14.0px;height:20px;line-height:20px;font-size:14.6px;color:#3a3a3a;left:893.3px;">75 Stag Hollow Ct</div>
<div class="t" style="top:14.0px;height:20px;line-height:20px;font-size:14.6px;color:#3a3a3a;left:1076px;"><span style="letter-spacing:0.5px">93527</span></div>
<svg width="16" height="16" viewBox="0 0 16 16" fill="none" stroke="#404040" stroke-width="1.08" stroke-linecap="round" stroke-linejoin="round" style="position:absolute;left:1248.90px;top:15.90px"><path d="M1.4 9.5 L5 13.6 L14.6 2.6"/></svg>
<svg width="16" height="16" viewBox="0 0 16 16" fill="none" stroke="#404040" stroke-width="1.08" stroke-linecap="round" stroke-linejoin="round" style="position:absolute;left:1272.90px;top:15.90px"><circle cx="8" cy="8" r="6.6"/><path d="M4.5 8.5 L7.3 10.8 L10.9 4.7"/></svg>
<svg width="16" height="16" viewBox="0 0 16 16" fill="none" stroke="#404040" stroke-width="1.08" stroke-linecap="round" stroke-linejoin="round" style="position:absolute;left:1296.80px;top:15.90px"><path d="M2.1 4.6 H13.9"/><path d="M5.8 4.5 C6.3 0.8 10.5 0.8 11 4.5"/><path d="M3.5 4.8 V13 C3.5 13.9 4 14.4 4.9 14.4 H11.5 C12.4 14.4 12.9 13.9 12.9 13 V4.8"/><path d="M6.65 7.2 V11.9 M9.8 7.2 V11.9"/></svg>
</div>
<div class="row" style="top:516px;background:#fff">
<div class="cb" style="left:17px;top:16.0px"></div>
<div class="badge" style="left:67px;top:12.0px;width:94px;border-color:#7fd096;background:#eff8f1"><div class="dot" style="background:#3bb560"></div><div class="t" style="left:23px;top:0;height:22px;line-height:22px;font-size:14.6px;color:#3a3a3a">Approved</div></div>
<div class="t" style="top:14.0px;height:20px;line-height:20px;font-size:14.6px;color:#3a3a3a;right:909.49px;"><span style="letter-spacing:0.21px">68250139</span></div>
<div class="t" style="top:14.0px;height:20px;line-height:20px;font-size:14.6px;color:#3a3a3a;left:456.6px;">Faustino</div>
<div class="t" style="top:14.0px;height:20px;line-height:20px;font-size:14.6px;color:#3a3a3a;left:743px;">Cochrane</div>
<div class="t" style="top:14.0px;height:20px;line-height:20px;font-size:14.6px;color:#3a3a3a;left:893.3px;">93 Edgehurst Ln</div>
<div class="t" style="top:14.0px;height:20px;line-height:20px;font-size:14.6px;color:#3a3a3a;left:1076px;"><span style="letter-spacing:0.5px">90747</span></div>
<div class="tri" style="left:287px;top:0;border-width:0 13px 12px 0;border-color:transparent #3a8ddd transparent transparent"></div>
<div class="tri" style="left:567px;top:0;border-width:0 13px 12px 0;border-color:transparent #3a8ddd transparent transparent"></div>
<div class="tri" style="left:863px;top:0;border-width:0 13px 12px 0;border-color:transparent #3a8ddd transparent transparent"></div>
<svg width="16" height="16" viewBox="0 0 16 16" fill="none" stroke="#404040" stroke-width="1.08" stroke-linecap="round" stroke-linejoin="round" style="position:absolute;left:1272.90px;top:15.90px"><circle cx="8" cy="8" r="6.6"/><path d="M5.3 9.6 A3.1 3.1 0 1 0 6.3 5.3"/><path d="M4.5 4.5 L6.9 6.3 L4.6 7.1 Z" fill="#444" stroke-width="0.6"/></svg>
</div>
<div class="row" style="top:564px;background:#fff">
<div class="cb" style="left:17px;top:16.0px"></div>
<div class="badge" style="left:67px;top:12.0px;width:61px;border-color:#e9c63a;background:#fffdf1"><div class="dot" style="background:#e2ba0a"></div><div class="t" style="left:23px;top:0;height:22px;line-height:22px;font-size:14.6px;color:#3a3a3a">New</div></div>
<div class="t" style="top:14.0px;height:20px;line-height:20px;font-size:14.6px;color:#3a3a3a;right:909.7800000000001px;"><span style="letter-spacing:-0.08px">68340011</span></div>
<div class="t" style="top:14.0px;height:20px;line-height:20px;font-size:14.6px;color:#3a3a3a;left:456.6px;">Jere</div>
<div class="t" style="top:14.0px;height:20px;line-height:20px;font-size:14.6px;color:#3a3a3a;left:743px;">Paramo</div>
<div class="t" style="top:14.0px;height:20px;line-height:20px;font-size:14.6px;color:#3a3a3a;left:893.3px;">39 Daffodil Av</div>
<div class="t" style="top:14.0px;height:20px;line-height:20px;font-size:14.6px;color:#3a3a3a;left:1076px;"><span style="letter-spacing:0.5px">90734</span></div>
<svg width="16" height="16" viewBox="0 0 16 16" fill="none" stroke="#404040" stroke-width="1.08" stroke-linecap="round" stroke-linejoin="round" style="position:absolute;left:1248.90px;top:15.90px"><path d="M1.4 9.5 L5 13.6 L14.6 2.6"/></svg>
<svg width="16" height="16" viewBox="0 0 16 16" fill="none" stroke="#404040" stroke-width="1.08" stroke-linecap="round" stroke-linejoin="round" style="position:absolute;left:1272.90px;top:15.90px"><circle cx="8" cy="8" r="6.6"/><path d="M4.5 8.5 L7.3 10.8 L10.9 4.7"/></svg>
<svg width="16" height="16" viewBox="0 0 16 16" fill="none" stroke="#404040" stroke-width="1.08" stroke-linecap="round" stroke-linejoin="round" style="position:absolute;left:1296.80px;top:15.90px"><path d="M2.1 4.6 H13.9"/><path d="M5.8 4.5 C6.3 0.8 10.5 0.8 11 4.5"/><path d="M3.5 4.8 V13 C3.5 13.9 4 14.4 4.9 14.4 H11.5 C12.4 14.4 12.9 13.9 12.9 13 V4.8"/><path d="M6.65 7.2 V11.9 M9.8 7.2 V11.9"/></svg>
</div>
<div class="row" style="top:612px;background:#fff">
<div class="cb" style="left:17px;top:16.0px"></div>
<div class="badge" style="left:67px;top:12.0px;width:61px;border-color:#e9c63a;background:#fffdf1"><div class="dot" style="background:#e2ba0a"></div><div class="t" style="left:23px;top:0;height:22px;line-height:22px;font-size:14.6px;color:#3a3a3a">New</div></div>
<div class="t" style="top:14.0px;height:20px;line-height:20px;font-size:14.6px;color:#3a3a3a;right:909.2px;"><span style="letter-spacing:0.5px">68340038</span></div>
<div class="t" style="top:14.0px;height:20px;line-height:20px;font-size:14.6px;color:#3a3a3a;left:456.6px;">Veda</div>
<div class="t" style="top:14.0px;height:20px;line-height:20px;font-size:14.6px;color:#3a3a3a;left:743px;">Eisner</div>
<div class="t" style="top:14.0px;height:20px;line-height:20px;font-size:14.6px;color:#3a3a3a;left:893.3px;">37 Cold Cyn Ct</div>
<div class="t" style="top:14.0px;height:20px;line-height:20px;font-size:14.6px;color:#3a3a3a;left:1076px;"><span style="letter-spacing:0.5px">93774</span></div>
<svg width="16" height="16" viewBox="0 0 16 16" fill="none" stroke="#404040" stroke-width="1.08" stroke-linecap="round" stroke-linejoin="round" style="position:absolute;left:1248.90px;top:15.90px"><path d="M1.4 9.5 L5 13.6 L14.6 2.6"/></svg>
<svg width="16" height="16" viewBox="0 0 16 16" fill="none" stroke="#404040" stroke-width="1.08" stroke-linecap="round" stroke-linejoin="round" style="position:absolute;left:1272.90px;top:15.90px"><circle cx="8" cy="8" r="6.6"/><path d="M4.5 8.5 L7.3 10.8 L10.9 4.7"/></svg>
<svg width="16" height="16" viewBox="0 0 16 16" fill="none" stroke="#404040" stroke-width="1.08" stroke-linecap="round" stroke-linejoin="round" style="position:absolute;left:1296.80px;top:15.90px"><path d="M2.1 4.6 H13.9"/><path d="M5.8 4.5 C6.3 0.8 10.5 0.8 11 4.5"/><path d="M3.5 4.8 V13 C3.5 13.9 4 14.4 4.9 14.4 H11.5 C12.4 14.4 12.9 13.9 12.9 13 V4.8"/><path d="M6.65 7.2 V11.9 M9.8 7.2 V11.9"/></svg>
</div>
<div class="row" style="top:660px;background:#fff">
<div class="cb" style="left:17px;top:16.0px"></div>
<div class="badge" style="left:67px;top:12.0px;width:61px;border-color:#e9c63a;background:#fffdf1"><div class="dot" style="background:#e2ba0a"></div><div class="t" style="left:23px;top:0;height:22px;line-height:22px;font-size:14.6px;color:#3a3a3a">New</div></div>
<div class="t" style="top:14.0px;height:20px;line-height:20px;font-size:14.6px;color:#3a3a3a;right:909.2px;"><span style="letter-spacing:0.5px">68340049</span></div>
<div class="t" style="top:14.0px;height:20px;line-height:20px;font-size:14.6px;color:#3a3a3a;left:456.6px;">Dewayne</div>
<div class="t" style="top:14.0px;height:20px;line-height:20px;font-size:14.6px;color:#3a3a3a;left:743px;">Cavanagh</div>
<div class="t" style="top:14.0px;height:20px;line-height:20px;font-size:14.6px;color:#3a3a3a;left:893.3px;">9 Mac Millan Ranch Rd</div>
<div class="t" style="top:14.0px;height:20px;line-height:20px;font-size:14.6px;color:#3a3a3a;left:1076px;"><span style="letter-spacing:0.5px">93483</span></div>
<svg width="16" height="16" viewBox="0 0 16 16" fill="none" stroke="#404040" stroke-width="1.08" stroke-linecap="round" stroke-linejoin="round" style="position:absolute;left:1248.90px;top:15.90px"><path d="M1.4 9.5 L5 13.6 L14.6 2.6"/></svg>
<svg width="16" height="16" viewBox="0 0 16 16" fill="none" stroke="#404040" stroke-width="1.08" stroke-linecap="round" stroke-linejoin="round" style="position:absolute;left:1272.90px;top:15.90px"><circle cx="8" cy="8" r="6.6"/><path d="M4.5 8.5 L7.3 10.8 L10.9 4.7"/></svg>
<svg width="16" height="16" viewBox="0 0 16 16" fill="none" stroke="#404040" stroke-width="1.08" stroke-linecap="round" stroke-linejoin="round" style="position:absolute;left:1296.80px;top:15.90px"><path d="M2.1 4.6 H13.9"/><path d="M5.8 4.5 C6.3 0.8 10.5 0.8 11 4.5"/><path d="M3.5 4.8 V13 C3.5 13.9 4 14.4 4.9 14.4 H11.5 C12.4 14.4 12.9 13.9 12.9 13 V4.8"/><path d="M6.65 7.2 V11.9 M9.8 7.2 V11.9"/></svg>
</div>
<div class="row" style="top:708px;background:#fff">
<div class="cb" style="left:17px;top:16.0px"></div>
<div class="badge" style="left:67px;top:12.0px;width:61px;border-color:#e9c63a;background:#fffdf1"><div class="dot" style="background:#e2ba0a"></div><div class="t" style="left:23px;top:0;height:22px;line-height:22px;font-size:14.6px;color:#3a3a3a">New</div></div>
<div class="t" style="top:14.0px;height:20px;line-height:20px;font-size:14.6px;color:#3a3a3a;right:909.2px;"><span style="letter-spacing:0.5px">68340055</span></div>
<div class="t" style="top:14.0px;height:20px;line-height:20px;font-size:14.6px;color:#3a3a3a;left:743px;">Charolette Mccoy</div>
<div class="t" style="top:14.0px;height:20px;line-height:20px;font-size:14.6px;color:#3a3a3a;left:893.3px;">21 Ironstone Dr</div>
<div class="t" style="top:14.0px;height:20px;line-height:20px;font-size:14.6px;color:#3a3a3a;left:1076px;"><span style="letter-spacing:0.5px">94027</span></div>
<div class="tri" style="left:441px;top:0;border-width:16px 17px 0 0;border-color:#d9502b transparent transparent transparent"></div>
<svg width="16" height="16" viewBox="0 0 16 16" fill="none" stroke="#404040" stroke-width="1.08" stroke-linecap="round" stroke-linejoin="round" style="position:absolute;left:1248.90px;top:15.90px"><path d="M1.4 9.5 L5 13.6 L14.6 2.6"/></svg>
<svg width="16" height="16" viewBox="0 0 16 16" fill="none" stroke="#404040" stroke-width="1.08" stroke-linecap="round" stroke-linejoin="round" style="position:absolute;left:1272.90px;top:15.90px"><circle cx="8" cy="8" r="6.6"/><path d="M4.5 8.5 L7.3 10.8 L10.9 4.7"/></svg>
<svg width="16" height="16" viewBox="0 0 16 16" fill="none" stroke="#404040" stroke-width="1.08" stroke-linecap="round" stroke-linejoin="round" style="position:absolute;left:1296.80px;top:15.90px"><path d="M2.1 4.6 H13.9"/><path d="M5.8 4.5 C6.3 0.8 10.5 0.8 11 4.5"/><path d="M3.5 4.8 V13 C3.5 13.9 4 14.4 4.9 14.4 H11.5 C12.4 14.4 12.9 13.9 12.9 13 V4.8"/><path d="M6.65 7.2 V11.9 M9.8 7.2 V11.9"/></svg>
</div>
<div class="vl" style="left:300px;height:744px"></div>
<div class="vl" style="left:440px;height:744px"></div>
<div class="vl" style="left:580px;height:744px"></div>
<div class="vl" style="left:726px;height:744px"></div>
<div class="vl" style="left:876px;height:744px"></div>
<div class="vl" style="left:1059px;height:744px"></div>
<div class="vl" style="left:49px;height:744px;width:2px"></div>
<div class="vl" style="left:1192px;height:744px;width:2px"></div>
</div>
<div class="vl" style="left:300px;height:44px"></div>
<div class="vl" style="left:440px;height:44px"></div>
<div class="vl" style="left:580px;height:44px"></div>
<div class="vl" style="left:726px;height:44px"></div>
<div class="vl" style="left:876px;height:44px"></div>
<div class="vl" style="left:1059px;height:44px"></div>
<div class="vl" style="left:49px;height:44px;width:2px"></div>
<div class="vl" style="left:1192px;height:44px;width:2px"></div>
<div class="cb" style="left:17px;top:14px"></div>
<div class="t" style="left:73.60000000000002px;width:200px;text-align:center;top:12px;height:20px;line-height:20px;font-size:14.2px;font-weight:700;color:#333">Status</div>
<div class="t" style="left:336.6px;top:12px;height:20px;line-height:20px;font-size:14.2px;font-weight:700;color:#333">Contact...</div>
<div class="t" style="left:476.6px;top:12px;height:20px;line-height:20px;font-size:14.2px;font-weight:700;color:#333">First na...</div>
<div class="t" style="left:616.8px;top:12px;height:20px;line-height:20px;font-size:14.2px;font-weight:700;color:#333">Middle n...</div>
<div class="t" style="left:701.5px;width:200px;text-align:center;top:12px;height:20px;line-height:20px;font-size:14.2px;font-weight:700;color:#333">Last name</div>
<div class="t" style="left:868px;width:200px;text-align:center;top:12px;height:20px;line-height:20px;font-size:14.2px;font-weight:700;color:#333">Street address</div>
<div class="t" style="left:1096.3px;top:12px;height:20px;line-height:20px;font-size:14.2px;font-weight:700;color:#333">Postal c...</div>
<svg width="16" height="12" viewBox="0 0 16 12" fill="none" stroke="#555" stroke-width="1.1" stroke-linecap="round" stroke-linejoin="round" style="position:absolute;left:275.7px;top:16.900000000000006px"><path d="M1.2 1.6 H14.8 M3.6 6 H12.4 M5.8 10.4 H10.2"/></svg>
<svg width="14.8" height="8.4" viewBox="0 0 14.8 8.4" fill="none" stroke="#808080" stroke-width="1.1" stroke-linecap="round" stroke-linejoin="round" style="position:absolute;left:415.10px;top:18.10px"><path d="M1 1 L7.4 7.4 L13.8 1"/></svg>
<svg width="14.8" height="8.4" viewBox="0 0 14.8 8.4" fill="none" stroke="#808080" stroke-width="1.1" stroke-linecap="round" stroke-linejoin="round" style="position:absolute;left:555.20px;top:18.10px"><path d="M1 1 L7.4 7.4 L13.8 1"/></svg>
<svg width="14.8" height="8.4" viewBox="0 0 14.8 8.4" fill="none" stroke="#808080" stroke-width="1.1" stroke-linecap="round" stroke-linejoin="round" style="position:absolute;left:701.60px;top:18.10px"><path d="M1 1 L7.4 7.4 L13.8 1"/></svg>
<svg width="14.8" height="8.4" viewBox="0 0 14.8 8.4" fill="none" stroke="#808080" stroke-width="1.1" stroke-linecap="round" stroke-linejoin="round" style="position:absolute;left:851.60px;top:18.10px"><path d="M1 1 L7.4 7.4 L13.8 1"/></svg>
<svg width="14.8" height="8.4" viewBox="0 0 14.8 8.4" fill="none" stroke="#808080" stroke-width="1.1" stroke-linecap="round" stroke-linejoin="round" style="position:absolute;left:1034.40px;top:18.10px"><path d="M1 1 L7.4 7.4 L13.8 1"/></svg>
<svg width="14.8" height="8.4" viewBox="0 0 14.8 8.4" fill="none" stroke="#808080" stroke-width="1.1" stroke-linecap="round" stroke-linejoin="round" style="position:absolute;left:1174.60px;top:18.10px"><path d="M1 1 L7.4 7.4 L13.8 1"/></svg>
<div style="left:1333px;top:45px;width:17px;height:744px;background:#f0f0f0"></div>
<div style="left:1333px;top:188px;width:17px;height:429px;background:#cdcdcd"></div>
<div style="left:0px;top:789px;width:1350px;height:17px;background:#f0f0f0"></div>
<div style="left:17px;top:789px;width:571px;height:17px;background:#cdcdcd"></div>
<svg width="10" height="8" viewBox="0 0 10 8" fill="none" stroke="#4d4d4d" stroke-width="1.7" stroke-linecap="round" stroke-linejoin="round" style="position:absolute;left:1336.3px;top:49px"><path d="M1.5 6.2 L5 2.4 L8.5 6.2"/></svg>
<svg width="10" height="8" viewBox="0 0 10 8" fill="none" stroke="#4d4d4d" stroke-width="1.7" stroke-linecap="round" stroke-linejoin="round" style="position:absolute;left:1336.3px;top:777px"><path d="M1.5 1.8 L5 5.6 L8.5 1.8"/></svg>
<svg width="8" height="10" viewBox="0 0 8 10" fill="none" stroke="#4d4d4d" stroke-width="1.7" stroke-linecap="round" stroke-linejoin="round" style="position:absolute;left:4px;top:792.5px"><path d="M6.2 1.5 L2.4 5 L6.2 8.5"/></svg>
<svg width="8" height="10" viewBox="0 0 8 10" fill="none" stroke="#4d4d4d" stroke-width="1.7" stroke-linecap="round" stroke-linejoin="round" style="position:absolute;left:1321.3px;top:792.5px"><path d="M1.8 1.5 L5.6 5 L1.8 8.5"/></svg>
</div>
<div class="t" style="top:1037.50px;height:20px;line-height:20px;font-size:13px;color:#444;left:54.19999999999999px;width:160px;text-align:center;">100</div>
<div class="t" style="top:1037.50px;height:20px;line-height:20px;font-size:13px;color:#444;left:104.5px;width:160px;text-align:center;">200</div>
<div class="t" style="top:1037.50px;height:20px;line-height:20px;font-size:13px;color:#444;left:156.2px;width:160px;text-align:center;">500</div>
<div style="left:264px;top:1032px;width:53px;height:30px;background:#3a8ddd;border-radius:15px"></div>
<div class="t" style="top:1037.50px;height:20px;line-height:20px;font-size:13px;color:#fff;font-weight:700;left:210.5px;width:160px;text-align:center;">1000</div>
<div class="t" style="top:1036.50px;height:20px;line-height:20px;font-size:14.4px;color:#888;left:1183.3px;">Page 1 of 1 (25 rows)</div>
<svg width="10" height="16" viewBox="0 0 10 16" fill="none" stroke="#cfcfcf" stroke-width="1.2" stroke-linecap="round" stroke-linejoin="round" style="position:absolute;left:1341.4px;top:1039px"><path d="M7.6 2 L2.4 8 L7.6 14"/></svg>
<div style="left:1368px;top:1032px;width:30px;height:30px;background:#3a8ddd;border-radius:50%"></div>
<div class="t" style="top:1037.50px;height:20px;line-height:20px;font-size:13px;color:#fff;font-weight:700;left:1303px;width:160px;text-align:center;">1</div>
<svg width="10" height="16" viewBox="0 0 10 16" fill="none" stroke="#cfcfcf" stroke-width="1.2" stroke-linecap="round" stroke-linejoin="round" style="position:absolute;left:1411.4px;top:1039px"><path d="M2.4 2 L7.6 8 L2.4 14"/></svg>
<div style="left:1480px;top:88px;width:1px;height:987px;background:#dcdcdc"></div>
<svg width="17" height="16" viewBox="0 0 17 16" fill="none" stroke="#666" stroke-width="1.2" stroke-linecap="round" stroke-linejoin="round" style="position:absolute;left:1500.6px;top:109px"><rect x="1.5" y="0.9" width="13.6" height="14" rx="1.5"/><path d="M4.6 5.1 H9.2 M4.6 7.9 H12.2 M4.6 10.9 H9.2" stroke="#999" stroke-width="1.4" stroke-linecap="butt"/></svg>
<div class="t" style="top:104.60px;height:24px;line-height:24px;font-size:16.3px;color:#333;font-weight:700;left:1529.2px;">Audit log</div>
<svg width="16" height="16" viewBox="0 0 16 16" fill="none" stroke="#3c3c3c" stroke-width="1.1" stroke-linecap="round" stroke-linejoin="round" style="position:absolute;left:1875px;top:109px"><path d="M1.4 1.4 L14.6 14.6 M14.6 1.4 L1.4 14.6"/></svg>
<div style="left:1501px;top:146px;width:170px;height:28px;background:#e3eefa;border-radius:8px"></div>
<div class="t" style="top:151.00px;height:20px;line-height:20px;font-size:14.9px;color:#2f86dc;left:1509px;">Selected row: <b>Row 268</b></div>
<div class="t" style="top:197.60px;height:20px;line-height:20px;font-size:15px;color:#3c3c3c;left:1501px;">Show audit for</div>
<div style="left:1609px;top:190px;width:291px;height:34px;border:1px solid #ccc;border-radius:7px;background:#fff"></div>
<div class="t" style="top:197.60px;height:20px;line-height:20px;font-size:14.8px;color:#333;left:1622.5px;">The whole row</div>
<svg width="15.4" height="8.6" viewBox="0 0 15.4 8.6" fill="none" stroke="#555" stroke-width="1.15" stroke-linecap="round" stroke-linejoin="round" style="position:absolute;left:1873.10px;top:202.30px"><path d="M1 1 L7.7 7.6 L14.4 1"/></svg>
<div class="t" style="top:247.50px;height:20px;line-height:20px;font-size:15px;color:#555;left:1501px;">Sort by:</div>
<svg width="15.4" height="8.6" viewBox="0 0 15.4 8.6" fill="none" stroke="#555" stroke-width="1.15" stroke-linecap="round" stroke-linejoin="round" style="position:absolute;left:1578.30px;top:253.70px"><path d="M1 1 L7.7 7.6 L14.4 1"/></svg>
<div style="left:1621px;top:240px;width:249px;height:34px;border:1px solid #ccc;border-radius:7px;background:#fff"></div>
<svg width="18" height="18" viewBox="0 0 18 18" fill="none" stroke="#888" stroke-width="1.2" stroke-linecap="round" stroke-linejoin="round" style="position:absolute;left:1631.2px;top:248px"><circle cx="7.5" cy="7.4" r="5"/><path d="M11.2 11.2 L15.6 15.6"/></svg>
<div class="t" style="top:247.50px;height:20px;line-height:20px;font-size:14.4px;color:#999;left:1660.3px;">Search...</div>
<div style="left:1501px;top:286px;width:399px;height:1px;background:#e6e6e6"></div>
<div style="left:1501px;top:314.0px;width:12px;height:12px;background:#ddd;border-radius:50%"></div>
<div class="t" style="top:301.90px;height:20px;line-height:20px;font-size:14.73px;color:#444;left:1529.4px;">Row was approved (<b>Status</b> changed)</div>
<div class="t" style="top:324.00px;height:20px;line-height:20px;font-size:12.4px;color:#888;left:1529.4px;">Alice C.</div>
<div style="left:1578.3px;top:331.5px;width:3.4px;height:3.4px;background:#dcdcdc;border-radius:50%"></div>
<div class="t" style="top:324.00px;height:20px;line-height:20px;font-size:13.1px;color:#888;left:1588.4px;">today at 00:38</div>
<div style="left:1501px;top:380.0px;width:12px;height:12px;background:#ddd;border-radius:50%"></div>
<div class="t" style="top:367.90px;height:20px;line-height:20px;font-size:14.68px;color:#444;left:1529.4px;">Row was marked as Edited (<b>Status</b> changed)</div>
<div class="t" style="top:390.00px;height:20px;line-height:20px;font-size:12.4px;color:#888;left:1529.4px;">Alice C.</div>
<div style="left:1578.3px;top:397.5px;width:3.4px;height:3.4px;background:#dcdcdc;border-radius:50%"></div>
<div class="t" style="top:390.00px;height:20px;line-height:20px;font-size:13.1px;color:#888;left:1588.4px;">today at 00:38</div>
<div style="left:1501px;top:446.0px;width:12px;height:12px;background:#ddd;border-radius:50%"></div>
<div class="t" style="top:433.90px;height:20px;line-height:20px;font-size:14.86px;color:#444;left:1529.4px;"><b>First name</b> was changed from "Lino Alter" to "Lino"</div>
<div class="t" style="top:456.00px;height:20px;line-height:20px;font-size:12.4px;color:#888;left:1529.4px;">Alice C.</div>
<div style="left:1578.3px;top:463.5px;width:3.4px;height:3.4px;background:#dcdcdc;border-radius:50%"></div>
<div class="t" style="top:456.00px;height:20px;line-height:20px;font-size:13.1px;color:#888;left:1588.4px;">today at 00:37</div>
<div style="left:1501px;top:512.0px;width:12px;height:12px;background:#ddd;border-radius:50%"></div>
<div class="t" style="top:499.90px;height:20px;line-height:20px;font-size:14.83px;color:#444;left:1529.4px;"><b>Last name</b> was changed from <i>empty</i> to "Alter"</div>
<div class="t" style="top:522.00px;height:20px;line-height:20px;font-size:12.4px;color:#888;left:1529.4px;">Alice C.</div>
<div style="left:1578.3px;top:529.5px;width:3.4px;height:3.4px;background:#dcdcdc;border-radius:50%"></div>
<div class="t" style="top:522.00px;height:20px;line-height:20px;font-size:13.1px;color:#888;left:1588.4px;">today at 00:37</div>
</div></body></html>
